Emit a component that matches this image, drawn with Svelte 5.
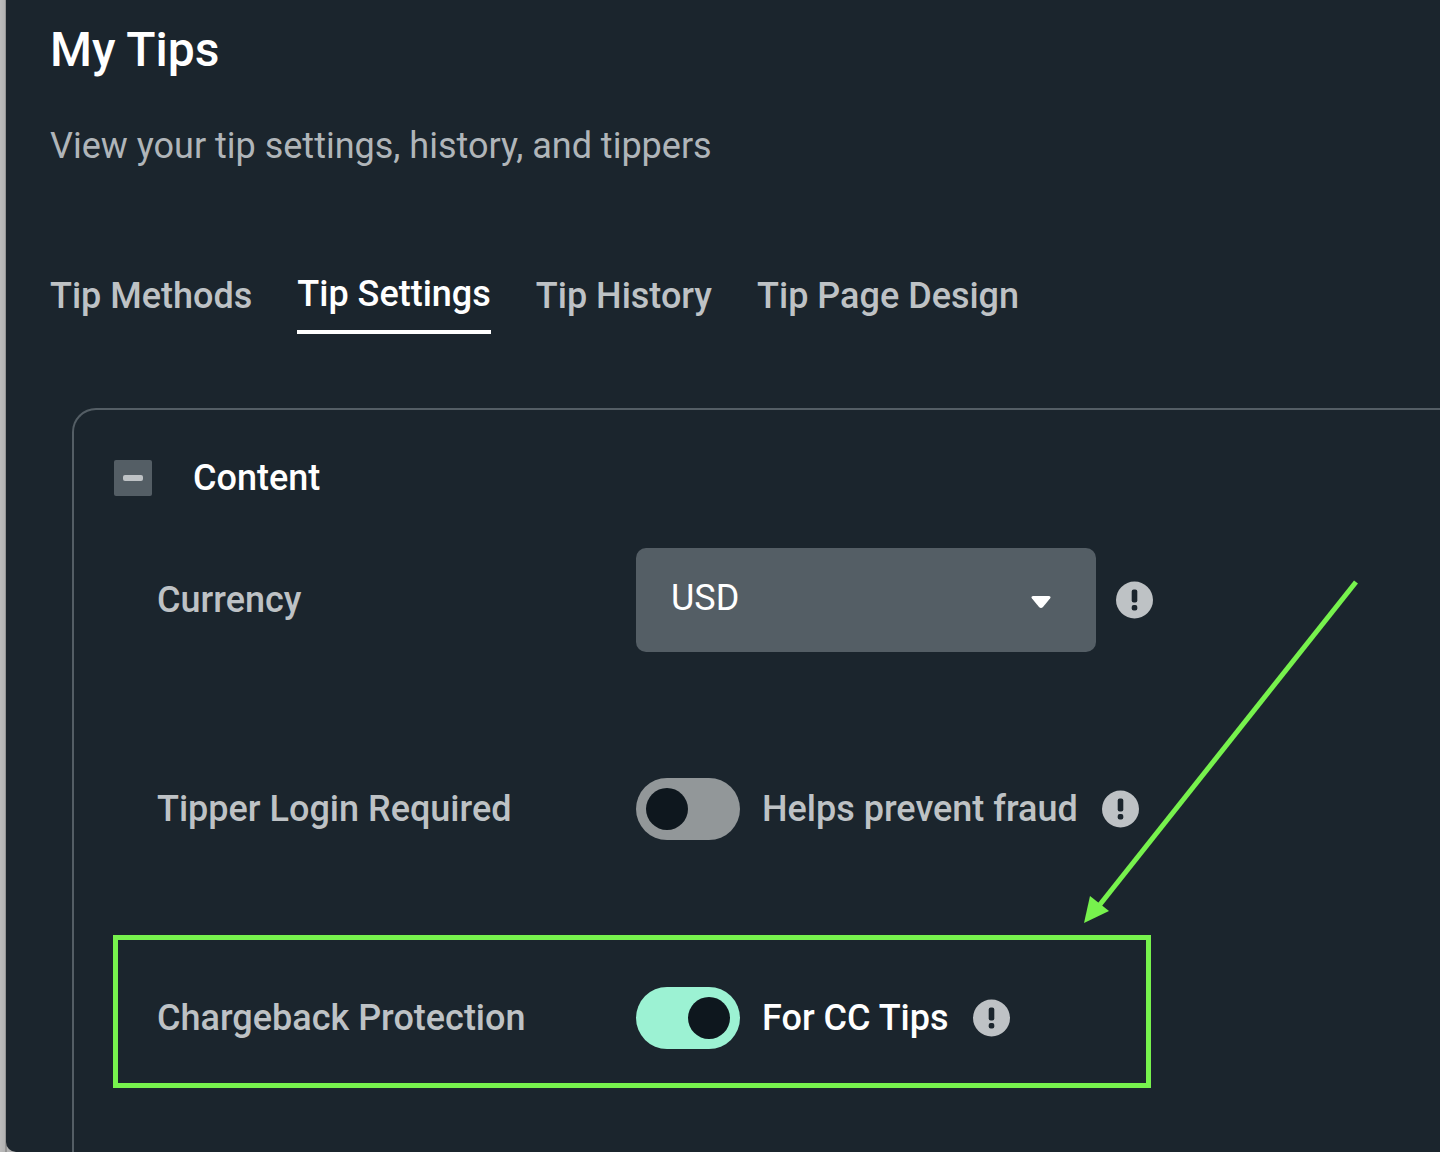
<script>
  const tabs = ['Tip Methods', 'Tip Settings', 'Tip History', 'Tip Page Design'];
  let active = $state('Tip Settings');
  let open = $state(true);
  let currency = $state('USD');
  let loginRequired = $state(false);
  let chargeback = $state(true);
</script>

{#snippet info(label)}
  <button class="info" type="button" aria-label={label}>
    <svg viewBox="0 0 38 38" aria-hidden="true">
      <circle cx="18.500" cy="19" r="18.500" fill="#bec2c5" />
      <rect x="15.700" y="8.500" width="5.600" height="13" rx="2" fill="#1b252d" />
      <rect x="15.700" y="24" width="5.600" height="5.600" rx="2" fill="#1b252d" />
    </svg>
  </button>
{/snippet}

<div class="window">
  <main>
    <h1>My Tips</h1>
    <p class="subtitle">View your tip settings, history, and tippers</p>

    <nav class="tabs" aria-label="Tips">
      {#each tabs as tab}
        <button
          type="button"
          class="tab"
          class:active={active === tab}
          aria-current={active === tab ? 'page' : undefined}
          onclick={() => (active = tab)}>{tab}</button>
      {/each}
    </nav>

    <section class="card">
      <header>
        <button class="collapse" type="button" aria-label="Toggle content" aria-expanded={open} onclick={() => (open = !open)}>
          <span class="dash"></span>
        </button>
        <h2>Content</h2>
      </header>

      {#if open}
        <div class="rows">
          <div class="row">
            <label class="name" for="currency">Currency</label>
            <div class="select">
              <select id="currency" bind:value={currency}>
                <option>USD</option>
                <option>EUR</option>
                <option>GBP</option>
              </select>
              <svg class="caret" viewBox="0 0 20 14" aria-hidden="true">
                <path d="M2 1H18Q20.500 1.500 19 3.500L12 12Q10 14 8 12L1 3.500Q-0.500 1.500 2 1Z" fill="#fff" />
              </svg>
            </div>
            {@render info('About currency')}
          </div>

          <div class="row">
            <label class="name" for="login">Tipper Login Required</label>
            <input id="login" class="switch" type="checkbox" bind:checked={loginRequired} />
            <span class="hint">Helps prevent fraud</span>
            {@render info('About tipper login')}
          </div>

          <div class="row callout">
            <label class="name" for="chargeback">Chargeback Protection</label>
            <input id="chargeback" class="switch" type="checkbox" bind:checked={chargeback} />
            <span class="hint" class:on={chargeback}>For CC Tips</span>
            {@render info('About chargeback protection')}
            <div class="frame"></div>
            <svg class="arrow" viewBox="0 0 276 344" aria-hidden="true">
              <path d="M272 2L14 327" stroke="#77f24d" stroke-width="5" fill="none" />
              <path d="M0 343L6 316L25 331Z" fill="#77f24d" />
            </svg>
          </div>
        </div>
      {/if}
    </section>
  </main>
</div>

<style>
  :global(body) {
    margin: 0;
    background: #b9b9b9;
    overflow-x: hidden;
  }
  .window {
    display: flex;
    box-sizing: border-box;
    min-height: 100vh;
    padding-left: 6px;
    background: linear-gradient(to right, #bcbcbc, #b2b2b2 5px, #777 6px, #b2b2b2 7px);
    font-family: Roboto, 'Liberation Sans', sans-serif;
    font-size: 36px;
    line-height: 48px;
    color: #bec2c5;
  }
  main {
    display: flex;
    flex: 1;
    flex-direction: column;
    min-width: 0;
    padding: 22px 0 0 44px;
    background: #1b252d;
    border-bottom-left-radius: 10px;
  }
  h1, h2, p {
    margin: 0;
  }
  h1 {
    font-size: 48px;
    line-height: 56px;
    font-weight: 500;
    color: #fff;
  }
  .subtitle {
    margin-top: 44px;
    color: #b0b5b9;
  }
  button {
    padding: 0;
    border: 0;
    background: none;
    font: inherit;
    color: inherit;
    cursor: pointer;
  }
  .tabs {
    display: flex;
    align-items: flex-start;
    gap: 45px;
    height: 64px;
    margin-top: 100px;
  }
  .tab {
    font-weight: 500;
    line-height: 52px;
    white-space: nowrap;
  }
  .tab.active {
    padding-bottom: 12px;
    border-bottom: 4px solid #fff;
    line-height: 48px;
    color: #fff;
  }
  .card {
    flex: 1;
    margin: 74px 0 0 22px;
    padding: 44px 0 32px 40px;
    border: 2px solid #545e65;
    border-width: 2px 0 0 2px;
    border-top-left-radius: 24px;
  }
  header {
    display: flex;
    align-items: center;
    gap: 41px;
  }
  .collapse {
    display: grid;
    place-items: center;
    width: 38px;
    height: 36px;
    border-radius: 2px;
    background: #545e65;
  }
  .dash {
    width: 20px;
    height: 6px;
    border-radius: 2px;
    background: #bec2c5;
  }
  h2 {
    font-size: 36px;
    font-weight: 500;
    color: #fff;
  }
  .rows {
    display: grid;
    gap: 105px;
    margin: 46px 0 0 43px;
  }
  .row {
    display: flex;
    align-items: center;
    height: 104px;
  }
  .name {
    flex: none;
    width: 479px;
    font-weight: 500;
  }
  .select {
    position: relative;
    width: 460px;
    height: 104px;
  }
  select {
    appearance: none;
    width: 100%;
    height: 100%;
    padding: 0 64px 4px 35px;
    border: 0;
    border-radius: 10px;
    background: #545e65;
    font: inherit;
    color: #fff;
  }
  .caret {
    position: absolute;
    top: 47px;
    right: 45px;
    width: 20px;
    height: 14px;
    pointer-events: none;
  }
  .info {
    flex: none;
    width: 38px;
    height: 38px;
    margin-left: 20px;
  }
  .info svg {
    display: block;
  }
  .switch {
    appearance: none;
    flex: none;
    box-sizing: border-box;
    width: 104px;
    height: 62px;
    margin: 0;
    padding: 10px;
    border-radius: 31px;
    background: #929799;
  }
  .switch::before {
    content: '';
    display: block;
    width: 42px;
    height: 42px;
    border-radius: 50%;
    background: #0e171e;
  }
  .switch:checked {
    background: #9cf2d3;
  }
  .switch:checked::before {
    margin-left: auto;
  }
  .hint {
    margin: 0 4px 0 22px;
    font-weight: 500;
  }
  .hint.on {
    color: #fff;
  }
  .callout {
    position: relative;
  }
  .frame {
    position: absolute;
    top: -31px;
    left: -44px;
    box-sizing: border-box;
    width: 1038px;
    height: 153px;
    border: 5px solid #77f24d;
    pointer-events: none;
  }
  .arrow {
    position: absolute;
    bottom: 146px;
    left: 927px;
    width: 276px;
    height: 344px;
    pointer-events: none;
  }
</style>
